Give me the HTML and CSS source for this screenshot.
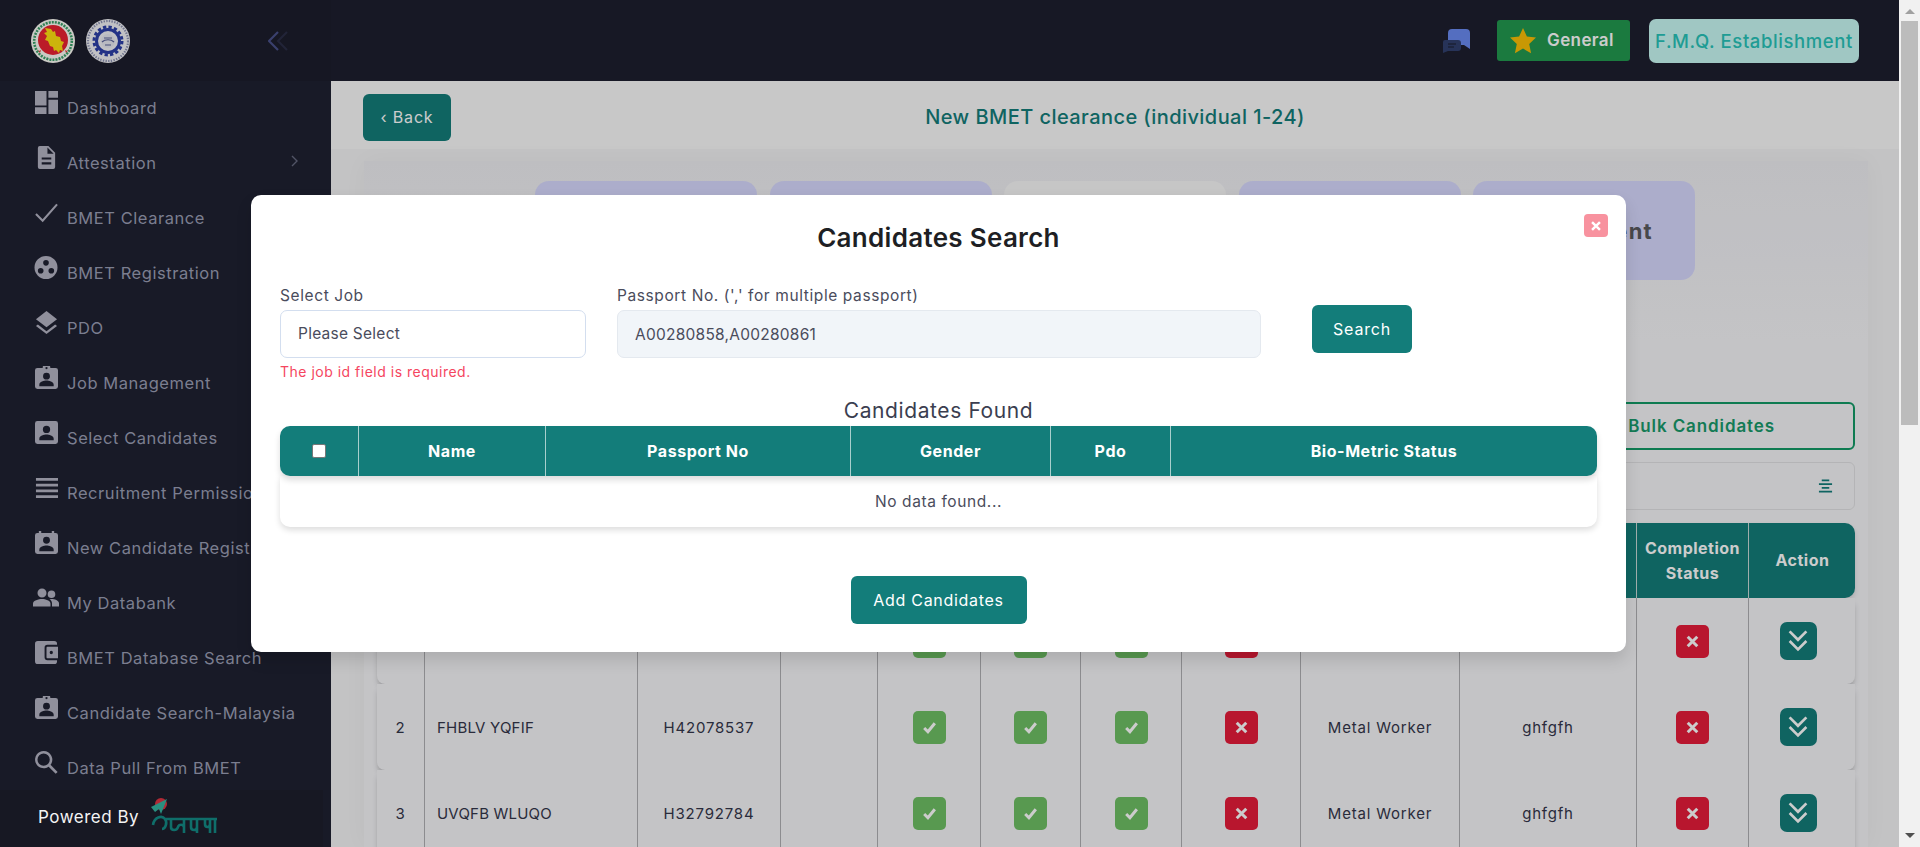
FILE: index.html
```html
<!DOCTYPE html>
<html lang="en">
<head>
<meta charset="utf-8">
<title>New BMET clearance</title>
<link rel="stylesheet" href="styles.css">
</head>
<body>
<div class="app">
  <aside class="sidebar">
    <div class="brand">
      <svg class="emblem" viewBox="0 0 44 44"><circle cx="22" cy="22" r="22" fill="#fdfdf6"/><circle cx="22" cy="22" r="18.800" fill="none" stroke="#3aa06a" stroke-width="2.600" stroke-dasharray="2 1.100"/><circle cx="22" cy="21" r="15" fill="#ea2233"/><path d="M14 9l6 1 2 3 2-1 1 5 4 1 1 4 3 1-2 4 1 5-3-1-1 3-3-3-2 1-1-4-3-1-2-5-3-1 2-4-3-3 3-1z" fill="#ffe010"/><path d="M6 30l2 2 2-1-1 3zM38 30l-2 2-2-1 1 3z" fill="#e33"/></svg>
      <svg class="emblem" viewBox="0 0 44 44"><circle cx="22" cy="22" r="22" fill="#f2f2f6"/><circle cx="22" cy="22" r="20" fill="none" stroke="#8f94b4" stroke-width="2.200" stroke-dasharray="1.400 1.300"/><circle cx="22" cy="22" r="14" fill="none" stroke="#2c3fa8" stroke-width="3" stroke-dasharray="3.300 2.200"/><circle cx="22" cy="22" r="11.500" fill="none" stroke="#2c3fa8" stroke-width="3"/><circle cx="22" cy="22" r="7" fill="#e8e9f2"/><path d="M16 23c3-3 9-3 12 0M18 19h8M19 26h6" fill="none" stroke="#5a6298" stroke-width="1.200"/></svg>
      <svg class="collapse" viewBox="0 0 20 20"><path d="M19 1l-9 9 9 9" fill="none" stroke="#2a2d46" stroke-width="2.200"/><path d="M10 1l-9 9 9 9" fill="none" stroke="#49508a" stroke-width="2.200"/></svg>
    </div>
    <nav class="menu">
      <a class="item"><svg viewBox="0 0 24 24"><path d="M0 0h12v15H0zM14 0h10v7H14zM14 9h10v15H14zM0 17h12v7H0z"/></svg><span>Dashboard</span></a>
      <a class="item"><svg viewBox="0 0 24 24"><path d="M5 0h9l7 7v15a2 2 0 0 1-2 2H5a2 2 0 0 1-2-2V2a2 2 0 0 1 2-2zm8 1.500V8h6.500zM7 12v2.200h10V12zm0 5v2.200h10V17z" fill-rule="evenodd"/></svg><span>Attestation</span><svg class="chev" viewBox="0 0 10 14"><path d="M2 2l5 5-5 5" fill="none" stroke="currentColor" stroke-width="1.400"/></svg></a>
      <a class="item"><svg viewBox="0 0 24 24"><path d="M1 13.500 8 20.500 23 3.500" fill="none" stroke-width="2.200" class="line"/></svg><span>BMET Clearance</span></a>
      <a class="item"><svg class="big" viewBox="0 0 26 26"><path d="M13 0a13 13 0 1 1 0 26 13 13 0 0 1 0-26zm0 4.500a3.200 3.200 0 1 0 0 6.400 3.200 3.200 0 0 0 0-6.400zM7 13.500a3.200 3.200 0 1 0 0 6.400 3.200 3.200 0 0 0 0-6.400zm12 0a3.200 3.200 0 1 0 0 6.400 3.200 3.200 0 0 0 0-6.400z" fill-rule="evenodd"/></svg><span>BMET Registration</span></a>
      <a class="item"><svg viewBox="0 0 24 24"><path d="M12 0 23 8.500 12 17 1 8.500zM3 14.200l9 7 9-7 2 1.500L12 24 1 15.700z"/></svg><span>PDO</span></a>
      <a class="item"><svg viewBox="0 0 24 24"><use href="#badge"/></svg><span>Job Management</span></a>
      <a class="item"><svg viewBox="0 0 24 24"><path d="M2.500 0h19A2.500 2.500 0 0 1 24 2.500v19a2.500 2.500 0 0 1-2.500 2.500h-19A2.500 2.500 0 0 1 0 21.500v-19A2.500 2.500 0 0 1 2.500 0zM12 5a3.800 3.800 0 1 0 0 7.600A3.800 3.800 0 0 0 12 5zM4.500 20h15v-1.500c0-3-5-4.300-7.500-4.300s-7.500 1.300-7.500 4.300z" fill-rule="evenodd"/></svg><span>Select Candidates</span></a>
      <a class="item"><svg viewBox="0 0 24 24"><path d="M1 2h23v3H1zM1 8h23v3H1zM1 14h23v3H1zM1 20h23v3H1z"/></svg><span>Recruitment Permission</span></a>
      <a class="item"><svg viewBox="0 0 24 24"><use href="#cal"/></svg><span>New Candidate Registration</span></a>
      <a class="item"><svg class="big" viewBox="0 0 26 20"><path d="M9 1a4.500 4.500 0 1 1 0 9 4.500 4.500 0 0 1 0-9zm9.500 2a3.800 3.800 0 1 1 0 7.600 3.800 3.800 0 0 1 0-7.600zM0 19v-3c0-3 5.500-4.500 9-4.500s8.500 1.500 8.500 4.500v3zm19 0v-3c0-1.800-.9-3.300-2.500-4.300l2-.2c3 0 7.500 1.500 7.500 4.300v3.200z"/></svg><span>My Databank</span></a>
      <a class="item"><svg viewBox="0 0 24 24"><path d="M3 0h17a3 3 0 0 1 3 3v1H13a3 3 0 0 0-3 3v10a3 3 0 0 0 3 3h10v1a3 3 0 0 1-3 3H3a3 3 0 0 1-3-3V3a3 3 0 0 1 3-3zm10 6h11v12H13a1 1 0 0 1-1-1V7a1 1 0 0 1 1-1zm4 4.300a1.700 1.700 0 1 0 0 3.400 1.700 1.700 0 0 0 0-3.400z" fill-rule="evenodd"/></svg><span>BMET Database Search</span></a>
      <a class="item"><svg viewBox="0 0 24 24"><use href="#badge"/></svg><span>Candidate Search-Malaysia</span></a>
      <a class="item"><svg viewBox="0 0 24 24"><path d="M9 0a9 9 0 0 1 7.200 14.400l7.400 7.400-2 2-7.400-7.400A9 9 0 1 1 9 0zm0 2.600a6.400 6.400 0 1 0 0 12.800A6.400 6.400 0 0 0 9 2.600z" fill-rule="evenodd"/></svg><span>Data Pull From BMET</span></a>
    </nav>
    <div class="powered">
      <span class="powered-label">Powered By</span>
      <svg class="ami" viewBox="0 0 68 38"><circle cx="11" cy="6" r="6" fill="#b02a35"/><path d="M1 9 17 1l-6 15-2-5-4 3z" fill="#2a9080"/><path d="M3 27c1-8 9-10 12-6 3 4 0 10-3 10M14 21h53M21 21v8c0 4 6 4 7 0 1-3 5-3 6 0v6M34 21v14M41 21v8c0 4 6 4 6 0v-3M47 21v14M55 21v5c0 4 5 4 5 0M60 21v14M65 21v14" fill="none" stroke="#0f6e6a" stroke-width="2.600"/></svg>
    </div>
  </aside>

  <div class="main">
    <header class="topbar">
      <svg class="chat" viewBox="0 0 29 25"><path d="M10 1h14a4 4 0 0 1 4 4v16l-6-4H10a4 4 0 0 1-4-4V5a4 4 0 0 1 4-4z" fill="#6a8af0"/><path d="M3 12h13a3 3 0 0 1 3 3v5a3 3 0 0 1-3 3H6l-5 2V14a2 2 0 0 1 2-2z" fill="#31406f"/><path d="M6 16h8M6 19h6" stroke="#1d1e2f" stroke-width="1.200"/></svg>
      <div class="tier"><svg viewBox="0 0 26 26"><path d="M13 0l3.900 8.600 9.100 1-6.800 6.300 1.900 9.400L13 20.600l-8.100 4.700 1.900-9.400L0 9.600l9.100-1z" fill="#fbbe05"/></svg><span>General</span></div>
      <div class="org">F.M.Q. Establishment</div>
    </header>
    <div class="titlebar">
      <button class="btn back">‹ Back</button>
      <h1 class="page-title">New BMET clearance (individual 1-24)</h1>
    </div>
    <section class="panel">
      <div class="card">
        <div class="steps">
          <div class="step"></div>
          <div class="step"></div>
          <div class="step active"></div>
          <div class="step"></div>
          <div class="step">Attachment</div>
        </div>
        <div class="bulk-row"><button class="bulk">Bulk Candidates</button></div>
        <div class="filter">
          <svg viewBox="0 0 16 14"><path d="M4 0h8v2H4zM1 4h14v2H1zM4 8h8v2H4zM1 12h14v2H1z"/></svg>
        </div>
        <div class="grid head">
          <div></div><div></div><div></div><div></div><div></div><div></div><div></div><div></div><div></div><div></div><div>Completion Status</div><div>Action</div>
        </div>
        <div class="grid row">
          <div></div><div class="left"></div><div></div><div></div>
          <div><i class="ok"><svg><use href="#tick"/></svg></i></div><div><i class="ok"><svg><use href="#tick"/></svg></i></div><div><i class="ok"><svg><use href="#tick"/></svg></i></div><div><i class="no"><svg><use href="#cross"/></svg></i></div>
          <div></div><div></div><div><i class="no"><svg><use href="#cross"/></svg></i></div><div><i class="more"><svg><use href="#down"/></svg></i></div>
        </div>
        <div class="grid row">
          <div>2</div><div class="left">FHBLV YQFIF</div><div>H42078537</div><div></div>
          <div><i class="ok"><svg><use href="#tick"/></svg></i></div><div><i class="ok"><svg><use href="#tick"/></svg></i></div><div><i class="ok"><svg><use href="#tick"/></svg></i></div><div><i class="no"><svg><use href="#cross"/></svg></i></div>
          <div>Metal Worker</div><div>ghfgfh</div><div><i class="no"><svg><use href="#cross"/></svg></i></div><div><i class="more"><svg><use href="#down"/></svg></i></div>
        </div>
        <div class="grid row">
          <div>3</div><div class="left">UVQFB WLUQO</div><div>H32792784</div><div></div>
          <div><i class="ok"><svg><use href="#tick"/></svg></i></div><div><i class="ok"><svg><use href="#tick"/></svg></i></div><div><i class="ok"><svg><use href="#tick"/></svg></i></div><div><i class="no"><svg><use href="#cross"/></svg></i></div>
          <div>Metal Worker</div><div>ghfgfh</div><div><i class="no"><svg><use href="#cross"/></svg></i></div><div><i class="more"><svg><use href="#down"/></svg></i></div>
        </div>
      </div>
    </section>
  </div>

  <div class="backdrop"></div>
  <div class="modal">
    <button class="close" aria-label="Close"><svg><use href="#cross"/></svg></button>
    <h2 class="modal-title">Candidates Search</h2>
    <form class="search">
      <div class="field job">
        <label>Select Job</label>
        <div class="input">Please Select</div>
        <p class="error">The job id field is required.</p>
      </div>
      <div class="field pass">
        <label>Passport No. (',' for multiple passport)</label>
        <div class="input filled">A00280858,A00280861</div>
      </div>
      <button type="button" class="btn search-btn">Search</button>
    </form>
    <h3 class="found">Candidates Found</h3>
    <div class="mhead">
      <div><span class="check"></span></div><div>Name</div><div>Passport No</div><div>Gender</div><div>Pdo</div><div>Bio-Metric Status</div>
    </div>
    <div class="mbody">No data found...</div>
    <div class="actions"><button type="button" class="btn add">Add Candidates</button></div>
  </div>
</div>
<div class="scrollbar">
  <span class="arrow up"></span>
  <span class="thumb"></span>
  <span class="fill"></span>
  <span class="arrow down"></span>
</div>
<svg class="defs" width="0" height="0">
  <symbol id="badge" viewBox="0 0 24 24"><path d="M2.500 2H8a4 4 0 0 1 8 0h5.500A2.500 2.500 0 0 1 24 4.500v17a2.500 2.500 0 0 1-2.500 2.500h-19A2.500 2.500 0 0 1 0 21.500v-17A2.500 2.500 0 0 1 2.500 2zM12 1a1.200 1.200 0 1 0 0 2.400A1.200 1.200 0 0 0 12 1zm0 6a3.600 3.600 0 1 0 0 7.200A3.600 3.600 0 0 0 12 7zM4.500 21h15v-1.500c0-3-5-4.300-7.500-4.300s-7.500 1.300-7.500 4.300z" fill-rule="evenodd"/></symbol>
  <symbol id="cal" viewBox="0 0 24 24"><path d="M2.500 2H4V0h2.500v2h11V0H20v2h1.500A2.500 2.500 0 0 1 24 4.500v17a2.500 2.500 0 0 1-2.500 2.500h-19A2.500 2.500 0 0 1 0 21.500v-17A2.500 2.500 0 0 1 2.500 2zM12 6a3.600 3.600 0 1 0 0 7.200A3.600 3.600 0 0 0 12 6zM4.500 21h15v-1.500c0-3-5-4.300-7.500-4.300s-7.500 1.300-7.500 4.300z" fill-rule="evenodd"/></symbol>
  <symbol id="tick" viewBox="0 0 16 16"><path d="M3 8.500 6.500 12 13 4" fill="none" stroke="#fff" stroke-width="2.800"/></symbol>
  <symbol id="cross" viewBox="0 0 16 16"><path d="M3.500 3.500l9 9M12.500 3.500l-9 9" fill="none" stroke="#fff" stroke-width="2.800"/></symbol>
  <symbol id="down" viewBox="0 0 20 20"><path d="M3 2l7 7 7-7M3 10l7 7 7-7" fill="none" stroke="#fff" stroke-width="2.200"/></symbol>
</svg>
</body>
</html>
```

FILE: styles.css
```css
* { box-sizing: border-box; }
html, body { margin: 0; height: 100%; overflow: hidden; }
body { display: flex; font-family: Inter, "Noto Sans", sans-serif; color: #4a4c5c; background: #fafafa; }
button { font-family: inherit; border: 0; cursor: pointer; }
h1, h2, h3, p { margin: 0; }
.defs { position: absolute; }

.app { position: relative; flex: 1; display: flex; height: 847px; overflow: hidden; min-width: 0; }

/* sidebar */
.sidebar { width: 331px; flex: none; display: flex; flex-direction: column; background: #1f2131; }
.brand { height: 81px; flex: none; display: flex; align-items: center; padding-left: 31px; gap: 11px; background: #1c1d2c; }
.emblem { width: 44px; height: 44px; }
.collapse { width: 20px; height: 20px; margin-left: 127px; }
.menu { flex: 1; display: flex; flex-direction: column; overflow: hidden; }
.item { height: 55px; flex: none; display: flex; align-items: flex-end; padding: 0 0 8px 35px; color: #9a9eb4; font-size: 16.500px; letter-spacing: .55px; white-space: nowrap; position: relative; }
.item:first-child { height: 45px; }
.item svg { width: 23px; height: 23px; fill: #b4b4c4; flex: none; margin-right: 9px; align-self: flex-end; margin-bottom: 4px; }
.item svg.big { width: 26px; margin-left: -2px; margin-right: 8px; }
.item .line { stroke: #b4b4c4; }
.item .chev { position: absolute; left: 290px; bottom: 13px; width: 10px; height: 14px; margin: 0; fill: none; color: #666a80; }
.powered { position: relative; z-index: 2; height: 57px; width: 323px; flex: none; display: flex; align-items: center; padding-left: 38px; background: #171823; color: #f4f4f4; font-size: 17px; letter-spacing: .5px; }
.powered-label { width: 112px; flex: none; margin-top: -3px; white-space: nowrap; }
.ami { width: 68px; height: 38px; margin-top: -3px; }

/* main */
.main { flex: 1; min-width: 0; display: flex; flex-direction: column; background: #fafafa; }
.topbar { height: 81px; flex: none; display: flex; align-items: center; justify-content: flex-end; background: #1d1e2f; padding-right: 40px; }
.chat { width: 29px; height: 25px; margin-right: 26px; }
.tier { width: 133px; height: 41px; display: flex; align-items: center; padding-left: 13px; gap: 11px; background: #22994f; border-radius: 3px; color: #fff; font-weight: 600; font-size: 17px; letter-spacing: .4px; }
.tier span { margin-top: -2px; }
.tier svg { width: 26px; height: 26px; }
.org { width: 210px; height: 44px; margin-left: 19px; display: flex; align-items: center; justify-content: center; background: #c9f9f4; border-radius: 7px; color: #27c4b9; font-size: 18.500px; font-weight: 500; letter-spacing: .6px; white-space: nowrap; }
.titlebar { height: 68px; flex: none; display: flex; align-items: center; padding: 4px 0 0 32px; }
.btn { background: #137d7a; color: #fff; border-radius: 6px; font-size: 16px; height: 48px; letter-spacing: .8px; }
.back { width: 88px; height: 47px; flex: none; }
.page-title { flex: 1; text-align: center; color: #137d7a; font-size: 20px; font-weight: 500; letter-spacing: .44px; padding-right: 120px; white-space: nowrap; }

.panel { flex: 1; min-height: 0; background: #f4f4f5; padding: 12px 31px 0 33px; }
.card { height: 100%; background: linear-gradient(#eeeef2, #f5f5f8 180px); padding: 20px 13px 0 13px; box-shadow: 0 0 24px rgba(0,0,0,.03); }
.steps { display: flex; gap: 12.500px; margin-left: 158px; height: 99px; }
.step { width: 222px; height: 99px; border-radius: 14px; background: #d8d9fe; display: flex; align-items: center; justify-content: center; font-size: 22px; font-weight: 700; letter-spacing: 1.200px; color: #5a5a5e; }
.step.active { background: #f8f8f8; }
.bulk-row { display: flex; justify-content: flex-end; margin-top: 122px; }
.bulk { width: 500px; height: 48px; background: transparent; border: 2px solid #129a66; border-radius: 6px; color: #189a6b; font-weight: 600; font-size: 17px; letter-spacing: .9px; text-align: right; padding-right: 78px; }
.filter { height: 48px; margin-top: 12px; border: 1px solid #e2e2e4; border-radius: 6px; display: flex; align-items: center; justify-content: flex-end; padding-right: 21px; }
.filter svg { width: 15px; height: 14px; fill: #137d7a; }
.grid { display: grid; grid-template-columns: 48px 213px 143px 97px 103px 100px 101px 119px 159px 177px 112px 107px; }
.head { height: 75px; margin-top: 13px; background: #137d7a; color: #fff; border-radius: 0 10px 10px 0; font-weight: 700; font-size: 16px; letter-spacing: .5px; line-height: 25px; text-align: center; box-shadow: 0 3px 5px rgba(0,0,0,.12); }
.head > div { display: flex; align-items: center; justify-content: center; border-right: 1px solid #c9d9d8; padding: 0 2px; }
.head > div:last-child { border: 0; }
.row { height: 86px; border-radius: 0 0 8px 8px; box-shadow: 0 5px 6px -2px rgba(0,0,0,.3); background: #f5f5f8; font-size: 15px; letter-spacing: .8px; color: #34364a; }
.row > div { display: flex; align-items: center; justify-content: center; border-right: 1px solid #b0b0b3; }
.row > div:last-child { border: 0; padding-right: 9px; }
.row > .left { justify-content: flex-start; padding-left: 12px; letter-spacing: .2px; }
.row i { display: flex; align-items: center; justify-content: center; width: 33px; height: 33px; border-radius: 5px; }
.row i svg { width: 17px; height: 17px; }
.row .ok { background: #6fc065; }
.row .no { background: #e61c3a; }
.row .more { width: 37px; height: 38px; background: #137d7a; border-radius: 7px; }
.row .more svg { width: 24px; height: 24px; }

/* overlay */
.backdrop { position: absolute; inset: 0; background: rgba(0,0,0,.2); }
.modal { position: absolute; left: 251px; top: 195px; width: 1375px; height: 457px; background: #fff; border-radius: 10px; padding: 0 29px; box-shadow: 0 8px 16px rgba(0,0,0,.12); }
.close { position: absolute; right: 18px; top: 19px; width: 24px; height: 23px; border-radius: 4px; background: #f8929f; padding: 0; display: flex; align-items: center; justify-content: center; }
.close svg { width: 14px; height: 14px; }
.modal-title { text-align: center; color: #1e1f24; font-size: 26px; font-weight: 600; letter-spacing: .3px; line-height: 30px; padding-top: 28px; box-sizing: content-box; }
.search { display: flex; margin-top: 28px; height: 106px; }
.field { display: flex; flex-direction: column; }
.field label { font-size: 15.500px; line-height: 30px; color: #4a4c5c; height: 29px; letter-spacing: .6px; white-space: nowrap; }
.job { width: 306px; }
.pass { width: 644px; margin-left: 31px; }
.input { height: 48px; border: 1px solid #d3deef; border-radius: 7px; padding: 0 17px 2px; display: flex; align-items: center; font-size: 15.500px; color: #4a4c5c; letter-spacing: .25px; }
.input.filled { background: #f1f5f9; border-color: #e4e9ef; padding-bottom: 0; }
.error { font-size: 14px; color: #f5465f; line-height: 20px; margin-top: 4px; letter-spacing: .5px; }
.search-btn { width: 100px; height: 48px; margin: 24px 0 0 51px; }
.found { text-align: center; color: #3b3e50; font-weight: 400; font-size: 21px; letter-spacing: .6px; line-height: 26px; height: 28px; margin-top: 11px; }
.mhead { display: grid; grid-template-columns: 79px 187px 305px 200px 120px 426px; height: 50px; background: #137d7a; color: #fff; border-radius: 10px; font-size: 16px; font-weight: 700; letter-spacing: .55px; box-shadow: 0 4px 6px rgba(0,0,0,.14); position: relative; }
.mhead > div { display: flex; align-items: center; justify-content: center; border-right: 1px solid #a8cfcd; }
.mhead > div:last-child { border: 0; }
.check { width: 14px; height: 14px; background: #fff; border: 1px solid #777; border-radius: 2px; }
.mbody { height: 51px; display: flex; align-items: center; justify-content: center; font-size: 15.500px; color: #4a4c5c; border-radius: 0 0 10px 10px; box-shadow: 0 3px 6px rgba(0,0,0,.14); letter-spacing: .6px; }
.actions { display: flex; justify-content: center; margin-top: 49px; }
.add { width: 176px; height: 48px; letter-spacing: .7px; }

/* drawn window scrollbar */
.scrollbar { width: 21px; flex: none; height: 847px; display: flex; flex-direction: column; align-items: center; background: #f1f1f1; }
.thumb { width: 17px; height: 404px; background: #bcbcbc; margin-top: 7px; }
.fill { flex: 1; }
.arrow { width: 0; height: 0; border-left: 5px solid transparent; border-right: 5px solid transparent; flex: none; }
.arrow.up { border-bottom: 5px solid #a0a0a0; margin-top: 9px; }
.arrow.down { border-top: 5px solid #505050; margin-bottom: 9px; }
```
